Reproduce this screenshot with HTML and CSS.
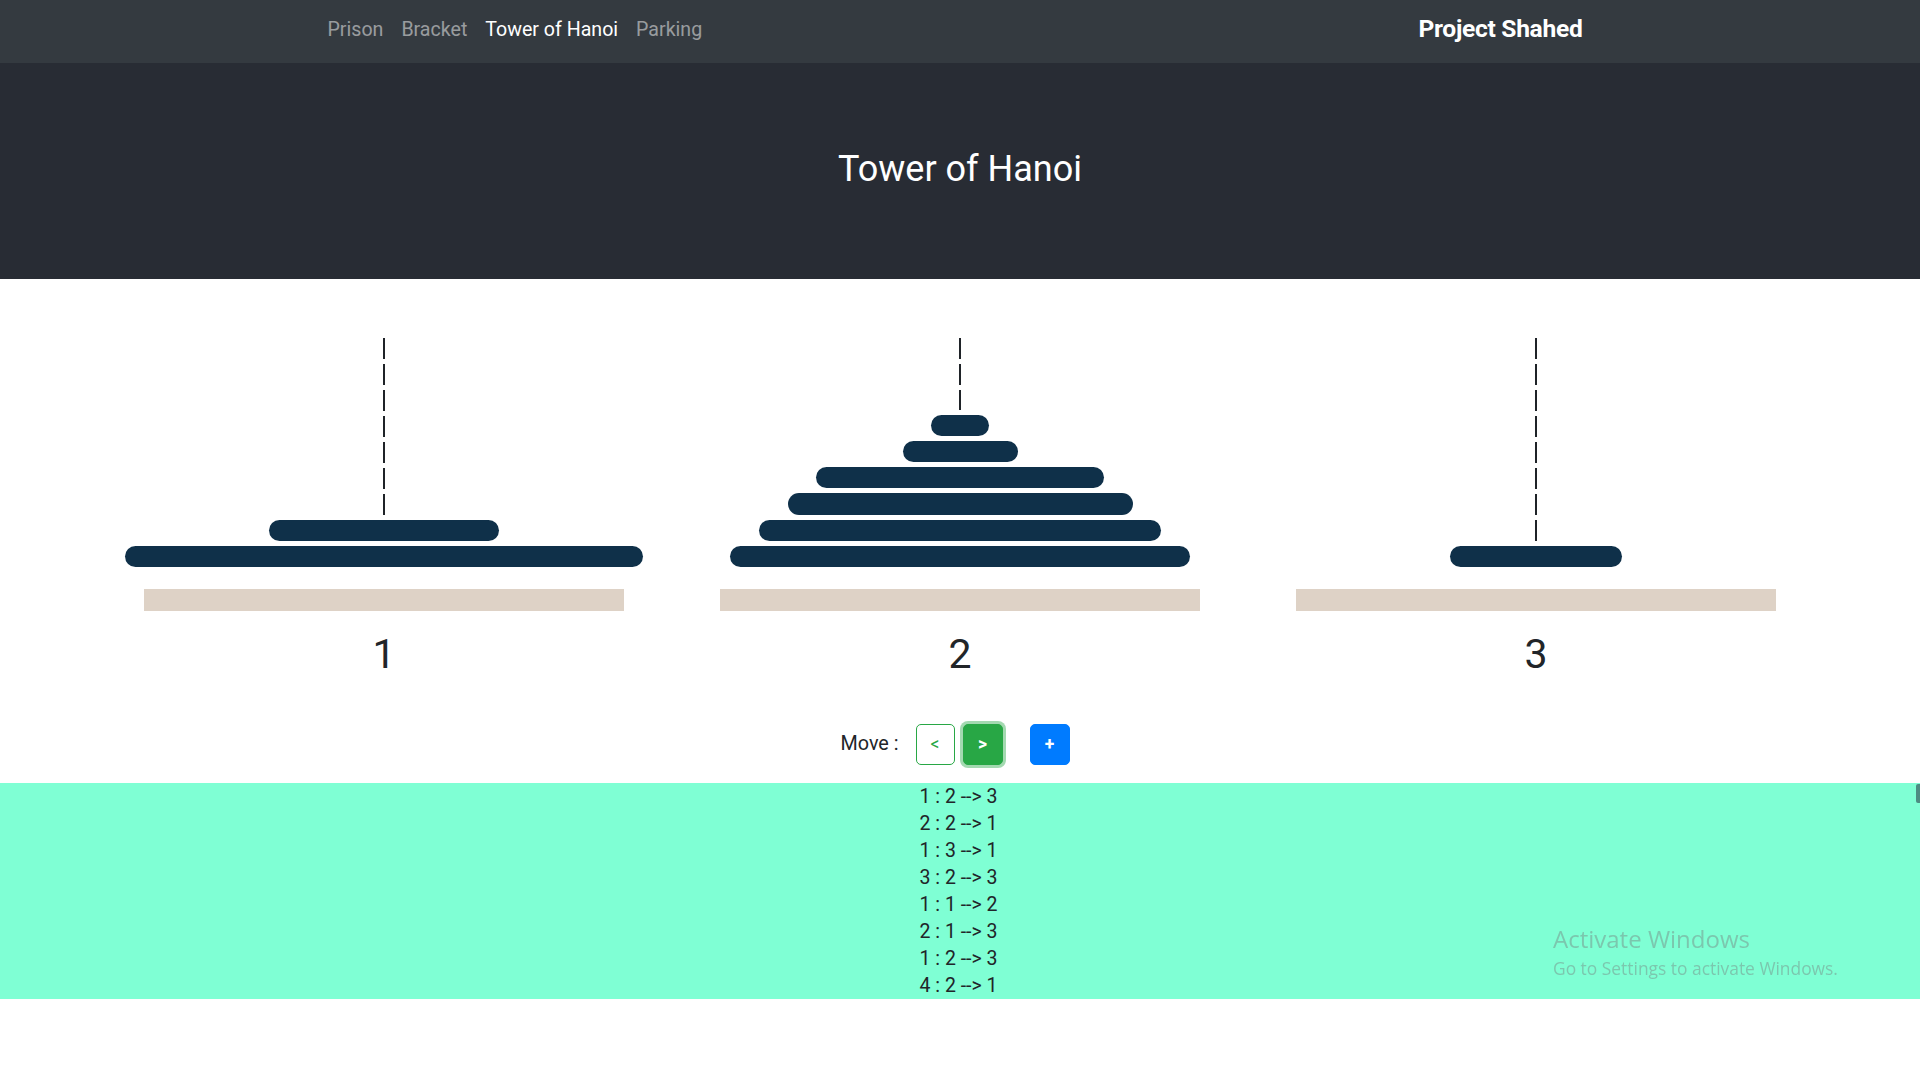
FILE: index.html
```html
<!DOCTYPE html>
<html lang="en">
<head>
<meta charset="utf-8">
<title>Tower of Hanoi</title>
<link rel="stylesheet" href="styles.css">
</head>
<body>
<nav class="navbar">
  <div class="nav-inner">
    <ul class="nav-links">
      <li><a class="nav-link" href="#">Prison</a></li>
      <li><a class="nav-link" href="#">Bracket</a></li>
      <li><a class="nav-link active" href="#">Tower of Hanoi</a></li>
      <li><a class="nav-link" href="#">Parking</a></li>
    </ul>
    <a class="brand" href="#">Project Shahed</a>
  </div>
</nav>

<header class="hero">
  <h1 class="hero-title">Tower of Hanoi</h1>
</header>

<main>
  <section class="towers">
    <div class="tower">
      <div class="stack">
        <div class="peg"></div>
        <div class="disk" style="width:230px"></div>
        <div class="disk" style="width:517.5px"></div>
      </div>
      <div class="base"></div>
      <div class="label">1</div>
    </div>
    <div class="tower">
      <div class="stack">
        <div class="peg"></div>
        <div class="disk" style="width:57.5px"></div>
        <div class="disk" style="width:115px"></div>
        <div class="disk" style="width:287.5px"></div>
        <div class="disk" style="width:345px"></div>
        <div class="disk" style="width:402.5px"></div>
        <div class="disk" style="width:460px"></div>
      </div>
      <div class="base"></div>
      <div class="label">2</div>
    </div>
    <div class="tower">
      <div class="stack">
        <div class="peg"></div>
        <div class="disk" style="width:172.5px"></div>
      </div>
      <div class="base"></div>
      <div class="label">3</div>
    </div>
  </section>

  <div class="controls">
    <span class="move-label">Move :</span>
    <button class="btn btn-outline-success">&lt;</button>
    <button class="btn btn-success focused">&gt;</button>
    <button class="btn btn-primary">+</button>
  </div>

  <section class="moves">
    <div class="move">1 : 2 --&gt; 3</div>
    <div class="move">2 : 2 --&gt; 1</div>
    <div class="move">1 : 3 --&gt; 1</div>
    <div class="move">3 : 2 --&gt; 3</div>
    <div class="move">1 : 1 --&gt; 2</div>
    <div class="move">2 : 1 --&gt; 3</div>
    <div class="move">1 : 2 --&gt; 3</div>
    <div class="move">4 : 2 --&gt; 1</div>
    <div class="scroll-thumb"></div>
  </section>
</main>

<div class="watermark">
  <div class="wm-title">Activate Windows</div>
  <div class="wm-sub">Go to Settings to activate Windows.</div>
</div>
</body>
</html>
```

FILE: styles.css
```css
* { box-sizing: border-box; }

html, body {
  margin: 0;
  padding: 0;
  background: #ffffff;
  font-family: Roboto, "Liberation Sans", Arial, sans-serif;
  color: #212529;
}

/* Navbar */
.navbar {
  background: #343a40;
  height: 63px;
}
.nav-inner {
  width: 1285px;
  height: 100%;
  margin: 0 auto;
  display: flex;
  align-items: center;
  padding-bottom: 3px;
}
.nav-links {
  list-style: none;
  margin: 0;
  padding: 0;
  display: flex;
}
.nav-link {
  display: block;
  padding: 8px 9px;
  font-size: 19.6px;
  line-height: 30px;
  color: rgba(255, 255, 255, 0.5);
  text-decoration: none;
}
.nav-links li:first-child .nav-link { padding-left: 10px; }
.nav-link.active { color: #ffffff; }
.brand {
  margin-left: auto;
  margin-right: 20px;
  font-size: 24.6px;
  font-weight: 700;
  color: #ffffff;
  text-decoration: none;
  line-height: 36px;
  letter-spacing: -0.3px;
  margin-bottom: 2px;
}

/* Hero */
.hero {
  background: #282c34;
  height: 216px;
  display: flex;
  align-items: center;
  justify-content: center;
  padding-bottom: 4px;
}
.hero-title {
  margin: 0;
  color: #ffffff;
  font-size: 36px;
  font-weight: 400;
  line-height: 44px;
}

/* Towers */
.towers {
  display: flex;
  justify-content: center;
  padding-top: 59px;
}
.tower {
  width: 576px;
  display: flex;
  flex-direction: column;
  align-items: center;
}
.stack {
  height: 229px;
  width: 100%;
  display: flex;
  flex-direction: column;
  align-items: center;
  justify-content: flex-end;
  gap: 5px;
}
.peg {
  flex: 1;
  width: 2px;
  background: repeating-linear-gradient(to bottom, #1f2328 0 21px, transparent 21px 26px);
}
.disk {
  height: 21.25px;
  flex: none;
  background: #0f3049;
  border-radius: 11px;
}
.base {
  margin-top: 22px;
  width: 480px;
  height: 22px;
  background: #ded2c6;
}
.label {
  margin-top: 19px;
  font-size: 41px;
  line-height: 48px;
  color: #212529;
}

/* Controls */
.controls {
  margin-top: 46px;
  display: flex;
  align-items: center;
  justify-content: center;
  padding-right: 10px;
}
.move-label {
  font-size: 19.8px;
  line-height: 30px;
  margin-right: 17px;
  margin-bottom: 2px;
}
.btn {
  width: 40px;
  height: 41px;
  padding: 0;
  border-radius: 5px;
  font-family: Roboto, "Liberation Sans", Arial, sans-serif;
  font-size: 17.5px;
  line-height: 1;
  cursor: pointer;
  border: 1px solid transparent;
}
.btn-outline-success {
  background: #ffffff;
  border-color: #28a745;
  color: #28a745;
  width: 39px;
}
.btn-success {
  margin-left: 8px;
  background: #28a745;
  border-color: #28a745;
  color: #ffffff;
  font-weight: 700;
}
.btn-success.focused {
  box-shadow: 0 0 0 3px rgba(72, 180, 97, 0.5);
}
.btn-primary {
  margin-left: 27px;
  background: #007bff;
  border-color: #007bff;
  color: #ffffff;
  font-weight: 700;
}

/* Moves list */
.moves {
  position: relative;
  margin-top: 18px;
  background: #7fffd4;
  text-align: center;
}
.move {
  font-size: 19.5px;
  line-height: 27px;
  color: #212529;
  padding-right: 3px;
}
.scroll-thumb {
  position: absolute;
  top: 1px;
  right: 0;
  width: 4px;
  height: 19px;
  border-radius: 2px 0 0 2px;
  background: #4d8c82;
}

/* OS watermark overlay */
.watermark {
  position: fixed;
  left: 1553px;
  top: 923px;
  font-family: "Open Sans", "Noto Sans", sans-serif;
  color: rgba(120, 130, 128, 0.45);
  pointer-events: none;
}
.wm-title {
  font-size: 24px;
  line-height: 32px;
}
.wm-sub {
  font-size: 17.4px;
  line-height: 26px;
}
```
